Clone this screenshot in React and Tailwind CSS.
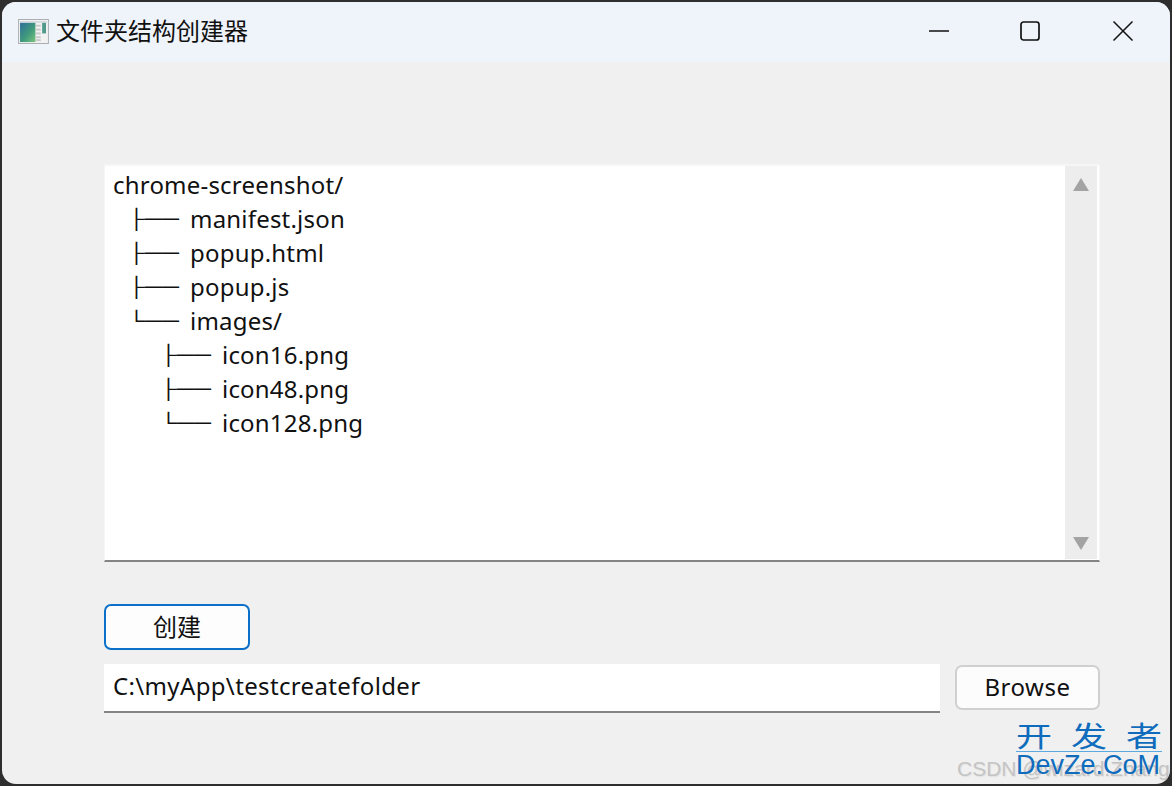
const FONT = "font-['Noto_Sans','Noto_Sans_CJK_SC',sans-serif]";

const tree = [
  { depth: 0, name: 'chrome-screenshot/' },
  { depth: 1, branch: '├──', name: 'manifest.json' },
  { depth: 1, branch: '├──', name: 'popup.html' },
  { depth: 1, branch: '├──', name: 'popup.js' },
  { depth: 1, branch: '└──', name: 'images/' },
  { depth: 2, branch: '├──', name: 'icon16.png' },
  { depth: 2, branch: '├──', name: 'icon48.png' },
  { depth: 2, branch: '└──', name: 'icon128.png' },
];

function AppIcon() {
  return (
    <svg width="31" height="25" viewBox="0 0 32 26">
      <defs>
        <linearGradient id="pane" x1="0" y1="0" x2="1" y2="1">
          <stop offset="0%" stopColor="#2f6f9a" />
          <stop offset="55%" stopColor="#3f9a7c" />
          <stop offset="100%" stopColor="#7cc47e" />
        </linearGradient>
      </defs>
      <rect x="0.5" y="0.5" width="31" height="25" fill="#f2f2f2" stroke="#a9adb0" />
      <rect x="2" y="2" width="28" height="2" fill="#d5dbe0" />
      <rect x="2" y="4" width="16" height="20" fill="url(#pane)" />
      <rect x="25" y="4" width="4" height="11" fill="#4f9a8a" />
      <rect x="18.5" y="6" width="5" height="2" fill="#c9c9c9" />
      <rect x="18.5" y="10" width="5" height="2" fill="#c9c9c9" />
      <rect x="18.5" y="14" width="5" height="2" fill="#c9c9c9" />
      <rect x="18.5" y="18" width="5" height="2" fill="#c9c9c9" />
      <rect x="18.5" y="21" width="5" height="2" fill="#c9c9c9" />
    </svg>
  );
}

function WindowButtons() {
  return (
    <div className="flex items-center">
      <svg width="20" height="20" viewBox="0 0 20 20" className="mr-[71px]">
        <path d="M0 10h20" stroke="#111" strokeWidth="1.6" />
      </svg>
      <svg width="20" height="20" viewBox="0 0 20 20" className="mr-[73px]">
        <rect x="1" y="1" width="18" height="18" rx="2.5" fill="none" stroke="#111" strokeWidth="1.7" />
      </svg>
      <svg width="20" height="20" viewBox="0 0 20 20" className="mr-[37px]">
        <path d="M0.5 0.5l19 19M19.5 0.5l-19 19" stroke="#111" strokeWidth="1.5" />
      </svg>
    </div>
  );
}

function TreeBox() {
  return (
    <div className="flex h-[398px] w-[996px] border-x border-t-2 border-b-2 border-x-[#f6f6f6] border-t-[#f6f6f6] border-b-[#848484] bg-white pt-[2px] pl-[8px] pr-[2px]">
      <div className="flex-1">
        {tree.map((row) => (
          <div key={row.name} className="flex h-[34px] items-center text-[24px] leading-[34px] tracking-[0.2px] text-[#111]">
            {row.depth > 0 && (
              <span
                className={
                  row.depth === 1
                    ? "ml-[15px] w-[62px] scale-y-[0.8] font-['Liberation_Sans',sans-serif] text-[24px] leading-[34px] tracking-normal"
                    : "ml-[47px] w-[62px] scale-y-[0.8] font-['Liberation_Sans',sans-serif] text-[24px] leading-[34px] tracking-normal"
                }
              >
                {row.branch}
              </span>
            )}
            <span>{row.name}</span>
          </div>
        ))}
      </div>
      <div className="-mt-[2px] mb-[1px] flex w-[32px] flex-col items-center justify-between bg-[#ededed] pt-[12px] pb-[9px]">
        <svg width="16" height="13" viewBox="0 0 16 13"><path d="M8 0l8 13H0z" fill="#a3a3a3" /></svg>
        <svg width="16" height="13" viewBox="0 0 16 13"><path d="M0 0h16L8 13z" fill="#a3a3a3" /></svg>
      </div>
    </div>
  );
}

export default function App() {
  return (
    <div className={`h-[786px] w-[1172px] overflow-hidden bg-[#2e2e2e] p-[2px] ${FONT}`}>
      <div className="relative flex h-full flex-col overflow-hidden rounded-[14px] bg-[#f0f0f0]">
        <div className="flex h-[60px] shrink-0 items-center bg-[#eff4fa] pb-[2px]">
          <div className="ml-[16px] mr-[7px] flex"><AppIcon /></div>
          <span className="flex-1 text-[24px] text-[#111]">文件夹结构创建器</span>
          <WindowButtons />
        </div>
        <div className="flex flex-col pt-[102px] pl-[102px]">
          <TreeBox />
          <button className="mt-[42px] flex h-[46px] w-[146px] items-center justify-center rounded-[7px] border-2 border-[#0a70c9] bg-[#fdfdfd] text-[24px] text-[#111]">
            创建
          </button>
          <div className="mt-[14px] flex w-[996px] items-start gap-[15px]">
            <div className="flex h-[49px] w-[836px] items-center border-b-2 border-[#848484] bg-white pb-[4px] pl-[9px] text-[24px] tracking-[0.35px] text-[#111]">
              C:\myApp\testcreatefolder
            </div>
            <button className="mt-[1px] flex h-[45px] flex-1 items-center justify-center rounded-[7px] border-2 border-[#d0d0d0] bg-[#fcfcfc] pb-[1px] text-[24px] tracking-[0.5px] text-[#111]">
              Browse
            </button>
          </div>
        </div>

        <div className="absolute top-[751px] left-[955px] font-['Liberation_Sans',sans-serif] text-[21px] whitespace-nowrap text-[#c4c4c4] [text-shadow:1px_1px_1px_#e2e2e2]">
          CSDN @wizard.Zhang
        </div>
        <div className="absolute top-[716px] left-[1014px] flex w-[146px] flex-col text-[#0f6cbd]">
          <div className="flex h-[34px] items-end justify-between border-b border-[#5aa9e0] text-[36px] leading-[36px]">
            <span className="origin-bottom scale-y-[0.78]">开</span>
            <span className="origin-bottom scale-y-[0.78]">发</span>
            <span className="origin-bottom scale-y-[0.78]">者</span>
          </div>
          <div className="font-['Liberation_Sans',sans-serif] text-[27px] leading-[27px] whitespace-nowrap">DevZe.CoM</div>
        </div>
      </div>
    </div>
  );
}
